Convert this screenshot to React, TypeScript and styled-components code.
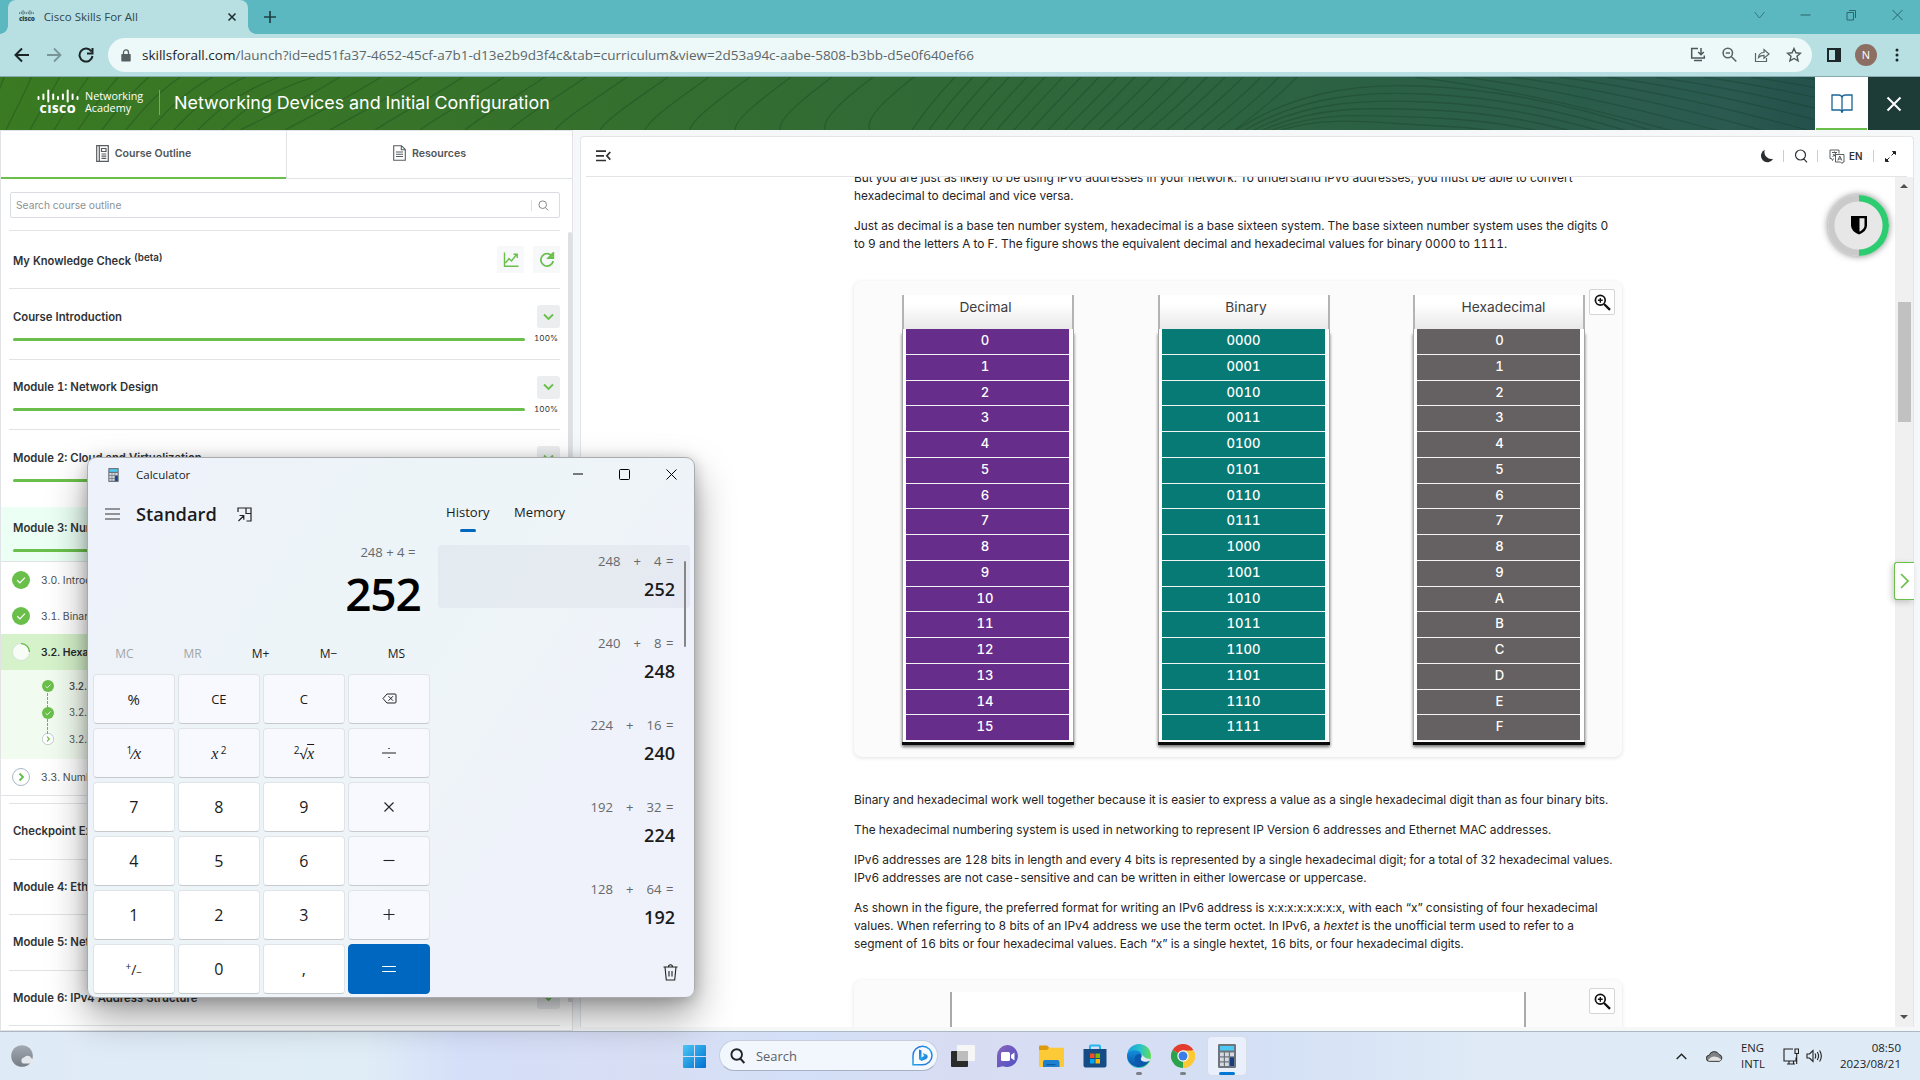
import React from "react";
import styled, { createGlobalStyle, css } from "styled-components";

const UI = `"Open Sans", "Noto Sans", sans-serif`;
const PAGE = `Inter, "Liberation Sans", sans-serif`;
const GREEN = "#6abf4b";

const Global = createGlobalStyle`
  * { box-sizing: border-box; }
  html, body { margin: 0; padding: 0; overflow: hidden; }
  svg { display: block; flex: none; }
`;

const Screen = styled.div`
  position: relative;
  width: 1920px;
  height: 1080px;
  display: flex;
  flex-direction: column;
  overflow: hidden;
  background: #f5f7f9;
  font-family: ${PAGE};
  font-variant-numeric: tabular-nums;
  white-space: nowrap;
`;

/* ---------- browser chrome ---------- */

const TabStrip = styled.div`
  height: 34px;
  flex: none;
  display: flex;
  align-items: stretch;
  background: #5bb8c1;
  padding-left: 8px;
  font-family: ${UI};
`;

const BrowserTab = styled.div`
  position: relative;
  width: 240px;
  display: flex;
  align-items: center;
  gap: 9px;
  padding: 0 10px 1px 11px;
  border-radius: 8px 8px 0 0;
  background: #b8e0e3;
  font-size: 11.5px;
  color: #30474a;
  &::before, &::after {
    content: "";
    position: absolute;
    bottom: 0;
    width: 8px;
    height: 8px;
  }
  &::before { left: -8px; background: radial-gradient(circle at 0 0, #5bb8c1 7.5px, #b8e0e3 8px); }
  &::after { right: -8px; background: radial-gradient(circle at 100% 0, #5bb8c1 7.5px, #b8e0e3 8px); }
`;

const TabTitle = styled.span`flex: 1;`;

const NewTab = styled.div`
  display: flex;
  align-items: center;
  padding-left: 16px;
`;

const WindowControls = styled.div`
  margin-left: auto;
  display: flex;
  align-items: center;
  gap: 35px;
  padding: 0 17px 5px 0;
`;

const Toolbar = styled.div`
  height: 43px;
  flex: none;
  display: flex;
  align-items: center;
  background: #b8e0e3;
  border-bottom: 1px solid #87abb0;
  padding: 0 0 0 14px;
  font-family: ${UI};
`;

const NavButtons = styled.div`
  display: flex;
  align-items: center;
  gap: 16px;
  width: 94px;
`;

const AddressBar = styled.div`
  width: 1704px;
  height: 34px;
  display: flex;
  align-items: center;
  padding: 0 10px 0 13px;
  border-radius: 17px;
  background: #edf8f8;
  font-size: 13.52px;
  color: #5d6668;
`;

const Url = styled.span`
  flex: 1;
  margin-left: 11px;
  b { font-weight: 400; color: #1c2526; }
`;

const AddressActions = styled.div`
  display: flex;
  gap: 16px;
  align-items: center;
`;

const BrowserActions = styled.div`
  display: flex;
  align-items: center;
  margin-left: 15px;
  gap: 14px;
`;

const Avatar = styled.div`
  width: 22px;
  height: 22px;
  border-radius: 50%;
  background: #8d6e63;
  color: #fff;
  font-size: 11px;
  line-height: 22px;
  text-align: center;
`;

/* ---------- course header ---------- */

const CourseHeader = styled.header`
  position: relative;
  height: 53px;
  flex: none;
  display: flex;
  align-items: center;
  padding-left: 37px;
  background: linear-gradient(90deg, #3a7a22 0, #377329 22%, #306838 52%, #2c6045 72%, #2a5a50 90%, #25524c 94%);
`;

const HeaderLines = styled.svg`
  position: absolute;
  inset: 0;
`;

const Brand = styled.div`
  position: relative;
  display: flex;
  align-items: center;
  margin-top: -2px;
  color: #fff;
`;

const BrandName = styled.div`
  width: 75px;
  margin-left: 6px;
  border-right: 1px solid #7ea56f;
  font-family: ${UI};
  font-size: 10.8px;
  line-height: 12.4px;
  height: 25px;
`;

const CourseTitle = styled.h1`
  position: relative;
  margin: -2px 0 0 14px;
  font-size: 17.92px;
  font-weight: 400;
  color: #fff;
`;

const HeaderButtons = styled.div`
  position: relative;
  margin-left: auto;
  height: 53px;
  display: flex;
`;

const HeaderButton = styled.div<{ $active?: boolean }>`
  width: ${(p) => (p.$active ? 53 : 52)}px;
  display: flex;
  align-items: center;
  justify-content: center;
  background: #1d3c38;
  ${(p) => p.$active && css`
    background: linear-gradient(${GREEN}, ${GREEN}) 50% 100% / 51px 2px no-repeat #fff;
  `}
`;

const Workspace = styled.div`
  height: 901px;
  flex: none;
  display: flex;
`;

/* ---------- outline sidebar ---------- */

const Sidebar = styled.aside`
  width: 573px;
  height: 901px;
  overflow: hidden;
  background: #fff;
  border: 1px solid #e2e3e6;
  color: #303336;
`;

const SideTabs = styled.div`
  display: flex;
  height: 48px;
`;

const SideTab = styled.div<{ $active?: boolean }>`
  flex: 1;
  display: flex;
  align-items: center;
  justify-content: center;
  gap: 6px;
  padding-bottom: ${(p) => (p.$active ? 2 : 3)}px;
  font-size: 10.6px;
  font-weight: 600;
  color: #525558;
  border-bottom: ${(p) => (p.$active ? `2px solid ${GREEN}` : "1px solid #e2e3e6")};
  border-left: ${(p) => (p.$active ? "none" : "1px solid #e2e3e6")};
`;

const SearchBox = styled.div`
  display: flex;
  align-items: center;
  height: 26px;
  margin: 13px 12px 12px 9px;
  padding: 0 10px 0 5px;
  border: 1px solid #d9dce1;
  border-radius: 2px;
  font-size: 10.26px;
  color: #8d9196;
`;

const SearchIcon = styled.span`
  margin-left: auto;
  padding-left: 6px;
  border-left: 1px solid #dcdfe2;
`;

const Outline = styled.div`
  display: flex;
  height: 820px;
`;

const OutlineList = styled.div`flex: 1;`;

const OutlineThumb = styled.div`
  width: 4px;
  height: 770px;
  margin: 2px 0 0 8px;
  border-radius: 4px 4px 0 0;
  background: #dcdfe4;
`;

const Section = styled.div<{ $h: number }>`
  height: ${(p) => p.$h}px;
  margin: 0 0 0 8px;
  padding-left: 4px;
  border-top: 1px solid #e2e3e5;
`;

const KnowledgeRow = styled.div`
  display: flex;
  align-items: center;
  height: 57px;
  gap: 9px;
`;

const KnowledgeTitle = styled.div`
  flex: 1;
  font-size: 11.15px;
  font-weight: 600;
  padding-top: 3px;
  sup { font-size: 9.8px; vertical-align: 4px; line-height: 0; }
`;

const SquareButton = styled.div`
  width: 27px;
  height: 27px;
  display: flex;
  align-items: center;
  justify-content: center;
  background: #f6f8fa;
`;

const SectionHead = styled.div<{ $top: number }>`
  display: flex;
  align-items: center;
  justify-content: space-between;
  height: 23px;
  margin-top: ${(p) => p.$top}px;
  font-size: 11.3px;
  font-weight: 600;
`;

const ChevronBox = styled.span`
  width: 23px;
  height: 23px;
  display: flex;
  align-items: center;
  justify-content: center;
  border-radius: 3px;
  background: #ebedef;
`;

const ProgressRow = styled.div`
  display: flex;
  align-items: center;
  justify-content: space-between;
  height: 12px;
  margin-top: 4px;
  padding-right: 2px;
  font-size: 8.2px;
`;

const Bar = styled.div`
  width: 512px;
  height: 3px;
  margin-top: 2px;
  border-radius: 2px;
  background: ${GREEN};
`;

const CurrentSection = styled.div`
  height: 55px;
  margin: 7px -10px 0 0;
  padding-left: 12px;
  border-bottom: 1px solid #e2e3e5;
  background: #ebfff4;
  overflow: hidden;
`;

const Topic = styled.div<{ $current?: boolean; $end?: boolean }>`
  display: flex;
  align-items: center;
  gap: 11px;
  height: ${(p) => (p.$end ? 37 : 36)}px;
  margin-right: -10px;
  padding-left: 11px;
  font-size: 10.4px;
  font-weight: ${(p) => (p.$current ? 600 : 400)};
  color: ${(p) => (p.$current ? "#26292b" : "#4c5053")};
  background: ${(p) => (p.$current ? "#d6f2cb" : "#fff")};
  border-bottom: ${(p) => (p.$end ? "1px solid #e2e3e5" : "none")};
`;

const SubTopics = styled.div`
  height: 89px;
  margin-right: -10px;
  padding: 3px 0 0 41px;
  background: #f2fbef;
`;

const SubTopic = styled.div<{ $bold?: boolean }>`
  position: relative;
  display: flex;
  align-items: center;
  gap: 15px;
  height: 26.5px;
  font-size: 9.7px;
  font-weight: ${(p) => (p.$bold ? 600 : 400)};
  color: #4c5053;
  &:not(:first-child)::before {
    content: "";
    position: absolute;
    left: 5px;
    top: -7px;
    height: 15px;
    border-left: 1px dashed #8f9a8f;
  }
`;

const Gap = styled.div`height: 7px;`;

/* ---------- reading panel ---------- */

const Reader = styled.main`
  width: 1334px;
  height: 891px;
  margin: 6px 0 0 7px;
  display: flex;
  flex-direction: column;
  background: #fff;
  border: 1px solid #e3e6e9;
  border-bottom: none;
  border-radius: 4px 4px 0 0;
`;

const ReaderBar = styled.div`
  height: 40px;
  flex: none;
  display: flex;
  align-items: center;
  justify-content: space-between;
  margin: 0 6px 0 5px;
  padding: 0 10px 1px 10px;
  border-bottom: 1px solid #e2e4e6;
`;

const ReaderTools = styled.div`
  display: flex;
  align-items: center;
`;

const Rule = styled.i<{ $l: number; $r: number }>`
  width: 1px;
  height: 12px;
  margin: 0 ${(p) => p.$r}px 0 ${(p) => p.$l}px;
  background: #c9ccd0;
`;

const Lang = styled.b`
  width: 15px;
  margin-left: 4px;
  font-size: 9.9px;
  font-weight: 600;
  color: #303336;
`;

const ReaderBody = styled.div`
  flex: 1;
  display: flex;
  overflow: hidden;
`;

const Article = styled.article`
  width: 768px;
  margin: -8px 273px 0 273px;
  font-size: 11.89px;
  line-height: 18px;
  color: #1f2326;
  p { margin: 0 0 12px; }
`;

const ScrollTrack = styled.div`
  flex: 1;
  display: flex;
  flex-direction: column;
  align-items: center;
  background: #f0f0f0;
`;

const Arrow = styled.i<{ $down?: boolean }>`
  margin-top: ${(p) => (p.$down ? "auto" : "7px")};
  margin-bottom: ${(p) => (p.$down ? "8px" : 0)};
  border: 4px solid transparent;
  ${(p) => (p.$down
    ? css`border-top-color: #505050; border-bottom-width: 0;`
    : css`border-bottom-color: #505050; border-top-width: 0;`)}
`;

const ScrollThumb = styled.div`
  width: 13px;
  height: 120px;
  margin-top: 114px;
  background: #c1c1c1;
`;

const Figure = styled.div<{ $h: number; $top: number }>`
  position: relative;
  display: flex;
  gap: 83.5px;
  height: ${(p) => p.$h}px;
  margin: ${(p) => p.$top}px 0 34px;
  padding: 14px 0 0 48px;
  border-radius: 8px;
  background: #fbfbfb;
  box-shadow: 0 1px 4px rgba(0, 0, 0, 0.12);
`;

const ZoomButton = styled.div`
  position: absolute;
  top: 8px;
  right: 7px;
  width: 26px;
  height: 26px;
  display: flex;
  align-items: center;
  justify-content: center;
  border: 1px solid #d5d5d5;
  border-radius: 2px;
  background: #fff;
`;

const Column = styled.div`
  width: 172px;
`;

const ColumnHead = styled.div<{ $shift: number }>`
  height: 34px;
  padding-top: 3px;
  text-align: center;
  text-indent: ${(p) => p.$shift * 2}px;
  font-size: 13.75px;
  color: #3d3d3d;
  background: linear-gradient(#fff 25%, #e9e9e9);
  border: solid #b4b4b4;
  border-width: 0 2px;
`;

const Cells = styled.div`
  padding: 0 4px 1px 3px;
  background: #fff;
  border: solid #a5a5a5;
  border-width: 0 1px;
  box-shadow: 0 3px 0 #0b0b0b, 0 5px 3px rgba(0, 0, 0, 0.55);
`;

const Cell = styled.div<{ $color: string; $shift: number }>`
  height: 25.75px;
  line-height: 22px;
  text-align: center;
  text-indent: ${(p) => p.$shift * 2}px;
  font-size: 13.1px;
  font-weight: 500;
  color: #fff;
  background: ${(p) => p.$color};
  border: solid #f4f4f4;
  border-width: 0 0 1.2px;
`;

const Sheet = styled.div`
  width: 576px;
  height: 60px;
  margin: -2px 0 0 48px;
  background: #fff;
  border: solid #aaa;
  border-width: 0 2px;
`;

/* ---------- overlays ---------- */

const ShieldBadge = styled.div`
  position: absolute;
  left: 1828px;
  top: 195px;
  width: 61px;
  height: 61px;
  border-radius: 50%;
  display: flex;
  align-items: center;
  justify-content: center;
  padding: 0 0 2px 0;
  background: radial-gradient(circle, #e7e7e7 23.5px, transparent 24.5px), linear-gradient(90deg, #cacaca 50%, #2ecc71 50%);
  box-shadow: 0 0 7px rgba(0, 0, 0, 0.5);
`;

const DrawerHandle = styled.div`
  position: absolute;
  left: 1894px;
  top: 562px;
  width: 20px;
  height: 38px;
  display: flex;
  align-items: center;
  justify-content: center;
  background: #fff;
  border: 1px solid ${GREEN};
  border-right: none;
  border-radius: 3px 0 0 3px;
  box-shadow: -2px 2px 6px rgba(0, 0, 0, 0.2);
`;

/* ---------- calculator ---------- */

const CalcWindow = styled.section`
  position: absolute;
  left: 87px;
  top: 457px;
  width: 608px;
  height: 541px;
  display: flex;
  flex-direction: column;
  border: 1px solid #a9abae;
  border-radius: 9px;
  background: linear-gradient(125deg, #eef2fa 12%, #edf4f8 32%, #eef4f8 58%, #eff2fb 72%);
  box-shadow: 0 18px 38px rgba(0, 0, 0, 0.38), 0 2px 14px rgba(0, 0, 0, 0.2);
  font-family: ${UI};
  color: #1b1b1b;
`;

const CalcTitleBar = styled.div`
  height: 32px;
  flex: none;
  display: flex;
  align-items: center;
  gap: 17px;
  padding: 1px 17px 0 20px;
  font-size: 11.55px;
`;

const CalcControls = styled.div`
  margin: -1px 0 0 auto;
  display: flex;
  align-items: center;
  gap: 36px;
`;

const CalcBody = styled.div`
  flex: 1;
  display: flex;
`;

const Keypad = styled.div`
  width: 350px;
  padding-left: 5px;
`;

const ModeRow = styled.div`
  height: 56px;
  display: flex;
  align-items: center;
  padding-left: 12px;
  margin-top: -4px;
`;

const Mode = styled.div`
  margin: 0 20px 0 16px;
  font-size: 18.3px;
  font-weight: 600;
  line-height: 24px;
`;

const Expression = styled.div`
  margin: 1px 22.5px 0 0;
  text-align: right;
  font-size: 13.1px;
  line-height: 18px;
  color: #666a6d;
`;

const Display = styled.div`
  margin: 4px 17.5px 0 0;
  height: 54px;
  text-align: right;
  font-size: 46px;
  line-height: 56px;
  font-weight: 600;
  letter-spacing: -1.2px;
  color: #000;
`;

const MemoryRow = styled.div`
  display: grid;
  grid-template-columns: repeat(5, 68px);
  height: 41px;
  margin: 14px 0 0 -2.5px;
  align-items: center;
  justify-items: center;
  font-size: 12px;
`;

const MemoryKey = styled.span<{ $off?: boolean }>`
  color: ${(p) => (p.$off ? "#a2a5a8" : "#1b1b1b")};
`;

const Keys = styled.div`
  display: grid;
  grid-template-columns: repeat(4, 81.5px);
  grid-auto-rows: 50.4px;
  gap: 3.6px;
`;

const Key = styled.div<{ $kind: "op" | "num" | "eq" }>`
  display: flex;
  align-items: center;
  justify-content: center;
  border: 1px solid ${(p) => (p.$kind === "eq" ? "#0067c0" : "#dfe4e8")};
  border-bottom-color: ${(p) => (p.$kind === "eq" ? "#0067c0" : "#c6cacd")};
  border-radius: 4px;
  background: ${(p) => ({ op: "#f8f9fe", num: "#fff", eq: "#0067c0" }[p.$kind])};
  font-size: ${(p) => (p.$kind === "num" ? 16 : 13)}px;
`;

const Formula = styled.span`
  font-size: 14px;
  i { font-family: "Liberation Serif", serif; font-size: 16px; }
  sup { font-size: 10px; line-height: 0; vertical-align: 5px; }
  sub { font-size: 10px; line-height: 0; vertical-align: -1px; }
  u { text-decoration: overline; }
`;

const Percent = styled.span`font-size: 15px;`;

const HistoryPane = styled.div`
  flex: 1;
  display: flex;
  flex-direction: column;
`;

const PaneTabs = styled.div`
  display: flex;
  gap: 24.5px;
  height: 54.5px;
  padding: 13px 0 0 8px;
  font-size: 13.08px;
  line-height: 18px;
`;

const PaneTab = styled.div<{ $on?: boolean }>`
  display: flex;
  flex-direction: column;
  align-items: center;
  &::after {
    content: "";
    width: 16px;
    height: 3px;
    margin-top: 8px;
    border-radius: 2px;
    background: ${(p) => (p.$on ? "#0067c0" : "transparent")};
  }
`;

const HistoryList = styled.div`
  position: relative;
  display: flex;
  flex-direction: column;
  gap: 19px;
  width: 252px;
`;

const HistoryThumb = styled.i`
  position: absolute;
  right: 4px;
  top: 16px;
  width: 2px;
  height: 86px;
  border-radius: 1px;
  background: #868686;
`;

const HistoryItem = styled.div<{ $hover?: boolean }>`
  height: 63px;
  padding: 7px 15px 0 0;
  border-radius: 4px;
  background: ${(p) => (p.$hover ? "rgba(30, 20, 40, 0.04)" : "transparent")};
  text-align: right;
`;

const Operation = styled.div`
  display: flex;
  justify-content: flex-end;
  padding-right: 1.5px;
  font-size: 13.1px;
  line-height: 19px;
  color: #66696c;
  span { margin-right: 13px; }
  b { margin-left: 4.5px; font-weight: 400; }
`;

const Result = styled.div`
  margin-top: 6px;
  font-size: 18px;
  font-weight: 600;
  line-height: 24px;
`;

const Trash = styled.div`
  margin: auto 16px 16px auto;
`;

/* ---------- taskbar ---------- */

const Taskbar = styled.footer`
  height: 49px;
  flex: none;
  display: grid;
  grid-template-columns: 683px 1fr auto;
  align-items: center;
  border-top: 1px solid #adb8c4;
  background: linear-gradient(90deg, #dfeaf7 0, #dfedf6 16%, #e0edf7 19%, #d5dff9 24%, #d8def4 33%, #d3e0f7 42%, #d8dcf2 50%, #d4e0f5 66%, #dfeaf6 77%, #deebf6 100%);
  font-family: ${UI};
`;

const Weather = styled.div`padding-left: 11px;`;

const TaskIcons = styled.div`
  display: flex;
  align-items: center;
  height: 48px;
`;

const TaskSearch = styled.div`
  display: flex;
  align-items: center;
  width: 219px;
  height: 31px;
  margin: 0 6px 1px 13px;
  padding: 0 4px 0 10px;
  border: 1px solid #c6cede;
  border-bottom-color: #a9b2c4;
  border-radius: 16px;
  background: #f2f6fd;
  font-size: 12.9px;
  color: #5c6066;
  span { flex: 1; margin-left: 11px; }
`;

const Task = styled.div<{ $state?: "open" | "active" }>`
  width: 38px;
  height: 38px;
  margin-right: 6px;
  display: flex;
  flex-direction: column;
  align-items: center;
  justify-content: center;
  position: relative;
  border-radius: 4px;
  background: ${(p) => (p.$state === "active" ? "#e9f0fb" : "transparent")};
  box-shadow: ${(p) => (p.$state === "active" ? "0 0 0 1px #d5dcea" : "none")};
  &::after {
    content: "";
    position: absolute;
    bottom: 0;
    width: ${(p) => (p.$state === "active" ? 16 : 6)}px;
    height: 3px;
    border-radius: 2px;
    background: ${(p) => (p.$state === "active" ? "#0078d4" : p.$state ? "#7c8087" : "transparent")};
  }
`;

const Tray = styled.div`
  display: flex;
  align-items: center;
  padding-right: 19px;
  line-height: 16px;
  color: #1a1c1f;
`;

const TrayCloud = styled.svg`margin: 0 18px 0 19px;`;

const TrayText = styled.div<{ $w: number; $align: string; $size: number }>`
  width: ${(p) => p.$w}px;
  text-align: ${(p) => p.$align};
  font-size: ${(p) => p.$size}px;
`;

const TrayPair = styled.div`
  display: flex;
  align-items: center;
  gap: 7px;
`;

/* ---------- icons ---------- */

type LineProps = { w: number; h?: number; d: string; color?: string; sw?: number; fill?: string };
const Line = ({ w, h = w, d, color = "#222", sw = 1, fill = "none" }: LineProps) => (
  <svg width={w} height={h} viewBox={`0 0 ${w} ${h}`} fill={fill} stroke={color} strokeWidth={sw}>
    <path d={d} />
  </svg>
);

const CiscoBars = ({ w, color }: { w: number; color: string }) => (
  <svg width={w} height={w / 3} viewBox="0 0 42 14" stroke={color} strokeWidth="2" strokeLinecap="round">
    <path d="M1.500 8v2M6.400 5.500v4.500M11.300 1.500v11M16.200 5.500v4.500M21 8v2M25.900 5.500v4.500M30.700 1.500v11M35.600 5.500v4.500M40.500 8v2" />
  </svg>
);

const LogoMark = styled.div<{ $size: number; $color: string }>`
  display: flex;
  flex-direction: column;
  align-items: center;
  color: ${(p) => p.$color};
  font-family: ${UI};
  font-size: ${(p) => p.$size}px;
  line-height: ${(p) => p.$size * 1.08}px;
  font-weight: 800;
  letter-spacing: ${(p) => (p.$size > 8 ? 0.6 : -0.2)}px;
`;

const CheckDot = ({ r }: { r: number }) => (
  <svg width={r * 2} height={r * 2} viewBox="0 0 18 18">
    <circle cx="9" cy="9" r="9" fill={GREEN} />
    <path d="M5.200 9.200l2.700 2.600 5-5.200" fill="none" stroke="#fff" strokeWidth="1.200" />
  </svg>
);

const NextDot = ({ r }: { r: number }) => (
  <svg width={r * 2} height={r * 2} viewBox="0 0 18 18">
    <circle cx="9" cy="9" r="8.500" fill="#fff" stroke="#a9b8c4" />
    <path d="M7.500 5.500L11 9l-3.500 3.500" fill="none" stroke={GREEN} strokeWidth="1.900" />
  </svg>
);

const PartialDot = () => (
  <svg width="18" height="18" viewBox="0 0 18 18">
    <circle cx="9" cy="9" r="8.500" fill="#f7fdf6" stroke="#d3dfd2" strokeWidth=".8" />
    <path d="M9 .6A8.400 8.400 0 0 1 17.400 9" fill="none" stroke={GREEN} strokeWidth="1.300" />
  </svg>
);

const Chevron = () => (
  <ChevronBox><Line w={11} h={8} d="M1 1.500l4.500 4.500L10 1.500" color={GREEN} sw={1.9} /></ChevronBox>
);

const Magnify = () => (
  <ZoomButton>
    <svg width="17" height="17" viewBox="0 0 17 17" fill="none" stroke="#111">
      <circle cx="6.300" cy="6.300" r="4.900" strokeWidth="1.700" />
      <path d="M3.900 6.300h4.800M6.300 3.900v4.800" strokeWidth="1.400" />
      <path d="M10 10l6 5.800" strokeWidth="2.300" />
    </svg>
  </ZoomButton>
);

const CalcGlyph = ({ w, h }: { w: number; h: number }) => (
  <svg width={w} height={h} viewBox="0 0 18 24">
    <rect width="18" height="24" rx="1.200" fill="#6d747c" />
    <rect x="2" y="2" width="14" height="4.500" fill="#4cc8f4" />
    <g fill="#d5dae0">
      <path d="M2 8.500h3.800v3.800H2zM7 8.500h3.800v3.800H7zM12 8.500h4v3.800h-4zM2 13.500h3.800v3.800H2zM7 13.500h3.800v3.800H7zM2 18.500h3.800v3.500H2zM7 18.500h3.800v3.500H7z" />
    </g>
    <path d="M12 13.500h4V22h-4z" fill="#173d80" />
  </svg>
);

const contour = () => {
  const out: string[] = [];
  for (let i = 0; i < 11; i++) out.push(`M${4 + i * 27 + i * i * 0.4} 0C${-2 + i * 26} 18 ${-12 + i * 25} 38 ${-18 + i * 24} 53`);
  for (let i = 0; i < 15; i++) out.push(`M${340 + i * 41} 0C${305 + i * 41.5} 22 ${262 + i * 43} 42 ${240 + i * 45} 53`);
  for (let i = 0; i < 20; i++) out.push(`M${955 + i * 18} 0C${938 + i * 18} 18 ${922 + i * 17.5} 38 ${912 + i * 17} 53`);
  for (let i = 0; i < 6; i++) out.push(`M${1236 + i * 9} 53C${1290 + i * 8} ${18 + i * 4} ${1350 + i * 4} ${6 + i * 8} ${1420 + i * 4} ${9 + i * 8}S${1560} ${24 + i * 8} ${1650} ${53 + i * 8}`);
  for (let i = 0; i < 11; i++) out.push(`M${1415 + i * 48} 0Q${1530 + i * 46} 14 ${1680 + i * 46} 56`);
  return out.join("");
};

const WinLogo = () => (
  <svg width="23" height="23" viewBox="0 0 23 23">
    <defs><linearGradient id="win" x1="0" y1="0" x2="1" y2="1"><stop stopColor="#4cc9f6" /><stop offset="1" stopColor="#006fd0" /></linearGradient></defs>
    <path d="M0 1q0-1 1-1h10v11H0zM12 0h10q1 0 1 1v10H12zM0 12h11v11H1q-1 0-1-1zM12 12h11v10q0 1-1 1H12z" fill="url(#win)" />
  </svg>
);

const Bing = () => (
  <svg width="21" height="21" viewBox="0 0 21 21">
    <defs><linearGradient id="bing" x1="0" y1="0" x2="1" y2="1"><stop stopColor="#2b66d8" /><stop offset=".5" stopColor="#1fa5e8" /><stop offset="1" stopColor="#2b5fd0" /></linearGradient></defs>
    <path d="M1 19.800V10.500a9.500 9.300 0 1 1 9.500 9.300z" fill="#f7fbff" stroke="url(#bing)" strokeWidth="1.500" />
    <path d="M7 4.500l2.500 1v7l2.500-1.500-1.200-3 4 1.700c1.500 1.200 1 3.400-.5 4.200L9.500 16 7 14.300z" fill="url(#bing)" />
  </svg>
);

const TaskView = () => (
  <svg width="24" height="22" viewBox="0 0 24 22">
    <rect x="0" y="6" width="17" height="16" rx="1" fill="#2b2b2b" />
    <rect x="6" y="0" width="18" height="16" rx="1" fill="#f6f6f6" />
    <rect x="6" y="6" width="11" height="10" fill="#bdbdbd" />
  </svg>
);

const Chat = () => (
  <svg width="24" height="24" viewBox="0 0 24 24">
    <defs><linearGradient id="chat" x1="0" y1="0" x2="1" y2="1"><stop stopColor="#8a62b8" /><stop offset="1" stopColor="#4b52c9" /></linearGradient></defs>
    <path d="M12 1a11 11 0 1 1-4 21.300L2 23.500V12A11 11 0 0 1 12 1z" fill="url(#chat)" />
    <rect x="6" y="8" width="9" height="9" rx="1.500" fill="#fff" />
    <path d="M16 11l3.500-2.500v8L16 14z" fill="#fff" />
  </svg>
);

const Folder = () => (
  <svg width="25" height="22" viewBox="0 0 25 22">
    <path d="M0 1.500Q0 .5 1 .5h7l2.500 2.500L8 5.500H0z" fill="#dd9a0c" />
    <path d="M0 5h8l2.500-2.200H24q1 0 1 1V21q0 1-1 1H1q-1 0-1-1z" fill="#fcc937" />
    <path d="M4 22v-5q0-2 2-2h12.500q2 0 2 2v5z" fill="#1e7fd0" />
    <path d="M7.500 19h9v1.200h-9z" fill="#0c5aa0" />
  </svg>
);

const Store = () => (
  <svg width="24" height="24" viewBox="0 0 24 24">
    <path d="M7 6V2.500q0-1 1-1h8q1 0 1 1V6" fill="none" stroke="#23b7ef" strokeWidth="2" />
    <path d="M.5 5h23v16.500q0 2-2 2h-19q-2 0-2-2z" fill="#164c86" />
    <path d="M7 9.500h4.500V14H7z" fill="#f25022" /><path d="M12.500 9.500H17V14h-4.500z" fill="#7fba00" />
    <path d="M7 15h4.500v4.500H7z" fill="#00a4ef" /><path d="M12.500 15H17v4.500h-4.500z" fill="#ffb900" />
  </svg>
);

const Edge = () => (
  <svg width="24" height="24" viewBox="0 0 24 24">
    <defs>
      <linearGradient id="eg" x1="0" y1=".3" x2="1" y2=".4"><stop stopColor="#1b9de2" /><stop offset=".55" stopColor="#2bc4c6" /><stop offset="1" stopColor="#62dc58" /></linearGradient>
      <linearGradient id="eb" x1="0" y1="0" x2="0" y2="1"><stop stopColor="#1290dc" /><stop offset="1" stopColor="#0c4fa2" /></linearGradient>
    </defs>
    <circle cx="12" cy="12" r="12" fill="url(#eg)" />
    <path d="M0 12C.5 7.500 4.500 6.200 7.500 6.200c5 0 7.300 3 7.300 5.800 0 1.300-1 2-1 3 0 1.700 2 2.800 4.700 2.800 1.600 0 3-.4 4-1A12 12 0 0 1 0 12z" fill="url(#eb)" />
    <path d="M9.500 11c-1.300 1-2 2.600-1.800 4.600.4 3.800 4 6.600 8 6 2.800-.6 5-2.300 6.800-4.800-3 1.600-8.700 1.200-8.700-1.800 0-1 1-1.700 1-3 0-2.500-3.500-2.700-5.300-1z" fill="#0b59ae" />
    <path d="M13.800 15c0-1 1-1.700 1-3 0-.8-.3-1.700-.8-2.500 0 0 3 5.500 9.500 5.500-.3.800-.6 1.300-1 1.800-3 1.600-8.700 1.200-8.700-1.800z" fill="#dfe8f7" />
  </svg>
);

const Chrome = () => (
  <svg width="24" height="24" viewBox="0 0 24 24">
    <path d="M12 12L1.600 6A12 12 0 0 1 22.400 6z" fill="#e33b2e" />
    <path d="M12 12l10.400-6A12 12 0 0 1 12 24z" fill="#fcc934" />
    <path d="M12 12v12A12 12 0 0 1 1.600 6z" fill="#2ba24c" />
    <path d="M12 6.500h10.600A12 12 0 0 1 12 24l4.800-9.200z" fill="#fcc934" />
    <circle cx="12" cy="12" r="5.700" fill="#fff" />
    <circle cx="12" cy="12" r="4.500" fill="#3b7de9" />
  </svg>
);

/* ---------- data ---------- */

const columns = [
  { title: "Decimal", color: "#662d8a", head: -2.5, cell: -2.5, values: Array.from({ length: 16 }, (_, i) => String(i)) },
  { title: "Binary", color: "#077a75", head: 2.5, cell: 0.5, values: Array.from({ length: 16 }, (_, i) => i.toString(2).padStart(4, "0")) },
  { title: "Hexadecimal", color: "#656162", head: 4.5, cell: 1, values: Array.from({ length: 16 }, (_, i) => i.toString(16).toUpperCase()) },
];

const history = [["248", "4", "252"], ["240", "8", "248"], ["224", "16", "240"], ["192", "32", "224"], ["128", "64", "192"]];

const opPath: Record<string, string> = {
  "÷": "M1 8h14M7.300 3.500h1.400M7.300 12.500h1.400",
  "×": "M3.500 3.500l9 9M12.500 3.500l-9 9",
  "−": "M2.500 7.500h11",
  "+": "M2.500 7.500h11M8 2v11",
  "=": "M1 5.500h14M1 10.500h14",
};
const op = (k: string) => <Line w={16} d={opPath[k]} color={k === "=" ? "#fff" : "#222"} sw={1.1} />;

const keys: ["op" | "num" | "eq", React.ReactNode][] = [
  ["op", <Percent>%</Percent>], ["op", "CE"], ["op", "C"],
  ["op", <Line w={15} h={12} d="M5 1h8q1 0 1 1v7q0 1-1 1H5L1 5.500zM6.500 3.200l4.500 4.500M11 3.200L6.500 7.700" />],
  ["op", <Formula><sup>1</sup>⁄<i>x</i></Formula>], ["op", <Formula><i>x</i><sup> 2</sup></Formula>],
  ["op", <Formula><sup>2</sup>√<u><i>x</i></u></Formula>], ["op", op("÷")],
  ["num", "7"], ["num", "8"], ["num", "9"], ["op", op("×")],
  ["num", "4"], ["num", "5"], ["num", "6"], ["op", op("−")],
  ["num", "1"], ["num", "2"], ["num", "3"], ["op", op("+")],
  ["num", <Formula><sup>+</sup>/<sub>−</sub></Formula>], ["num", "0"], ["num", ","], ["eq", op("=")],
];

const Module = ({ title, h, top, bar }: { title: string; h: number; top: number; bar?: boolean }) => (
  <Section $h={h}>
    <SectionHead $top={top}>{title}<Chevron /></SectionHead>
    {bar && <ProgressRow><Bar />100%</ProgressRow>}
  </Section>
);

export default function App() {
  return (
    <Screen>
      <Global />
      <TabStrip>
        <BrowserTab>
          <LogoMark $size={6.5} $color="#30474a"><CiscoBars w={15} color="#30474a" />cisco</LogoMark>
          <TabTitle>Cisco Skills For All</TabTitle>
          <Line w={12} d="M2.500 2.500l7 7M9.500 2.500l-7 7" sw={1.5} color="#1c2b2d" />
        </BrowserTab>
        <NewTab><Line w={12} d="M6 0v12M0 6h12" sw={1.7} color="#1f4145" /></NewTab>
        <WindowControls>
          <Line w={11} h={8} d="M.5 1l5 6 5-6" color="#37777e" />
          <Line w={11} h={2} d="M.5 1h10" color="#2c666d" />
          <Line w={11} h={12} d="M1 3.500h6.500v7.500H1zM3 1.500h6.500v7.500" color="#2c666d" />
          <Line w={11} h={12} d="M.5 1l10 10M10.500 1l-10 10" color="#2c666d" />
        </WindowControls>
      </TabStrip>

      <Toolbar>
        <NavButtons>
          <Line w={16} d="M15 8H2M8 1.500L1.500 8 8 14.500" sw={2} color="#1c2526" />
          <Line w={16} d="M1 8h13M8 1.500L14.500 8 8 14.500" sw={1.8} color="#7a9598" />
          <Line w={16} d="M13.500 4.500A6.500 6.500 0 1 0 14.500 9M14.500 1v5.500H9" sw={2} color="#1c2526" />
        </NavButtons>
        <AddressBar>
          <svg width="10" height="13" viewBox="0 0 10 13"><path d="M1 5h8q.7 0 .7.7v6q0 .8-.7.8H1q-.7 0-.7-.8v-6Q.3 5 1 5z" fill="#555e60" /><path d="M2.500 5.500V3.400a2.500 2.500 0 0 1 5 0v2.100" fill="none" stroke="#555e60" strokeWidth="1.300" /></svg>
          <Url><b>skillsforall.com</b>/launch?id=ed51fa37-4652-45cf-a7b1-d13e2b9d3f4c&tab=curriculum&view=2d53a94c-aabe-5808-b3bb-d5e0f640ef66</Url>
          <AddressActions>
            <Line w={16} d="M8 1.500H1.700V11h12.600V8.500M11 1v6.500M8.200 5L11 7.800 13.800 5M4 13.500h8" sw={1.5} color="#4e5759" />
            <Line w={16} d="M10.500 6A4.700 4.700 0 1 1 1.100 6a4.700 4.700 0 0 1 9.400 0zM9.300 9.500l5 5M3.700 6h4.300" sw={1.6} color="#5b6466" />
            <Line w={16} d="M1.500 6v8.500h11V11M4.500 10.500C5 6.500 7.500 5.500 10 5.500V2.500L15 7l-5 4.200V8.400C8 8.400 6 8.800 4.500 10.500z" sw={1.2} color="#5b6466" />
            <Line w={16} d="M8 1.500l1.900 4.300 4.600.4-3.500 3.100 1.100 4.600L8 11.500l-4.100 2.400L5 9.300 1.500 6.200l4.600-.4z" sw={1.4} color="#4e5759" />
          </AddressActions>
        </AddressBar>
        <BrowserActions>
          <svg width="14" height="14" viewBox="0 0 14 14"><path d="M1 1h12v12H1z" fill="none" stroke="#1d2628" strokeWidth="2" /><path d="M8 1h5v12H8z" fill="#1d2628" /></svg>
          <Avatar>N</Avatar>
          <svg width="8" height="14" viewBox="0 0 8 14" fill="#1d2628"><circle cx="6" cy="2" r="1.500" /><circle cx="6" cy="7" r="1.500" /><circle cx="6" cy="12" r="1.500" /></svg>
        </BrowserActions>
      </Toolbar>

      <CourseHeader>
        <HeaderLines width="1920" height="53" fill="none" stroke="#12351c" strokeOpacity=".28" strokeWidth="1.300"><path d={contour()} /></HeaderLines>
        <Brand>
          <LogoMark $size={11.2} $color="#fff"><CiscoBars w={42} color="#fff" />CISCO</LogoMark>
          <BrandName>Networking<br />Academy</BrandName>
        </Brand>
        <CourseTitle>Networking Devices and Initial Configuration</CourseTitle>
        <HeaderButtons>
          <HeaderButton $active><Line w={22} h={20} d="M11 3.500Q10.500 1.200 8 1H1v15h8q1.500 0 2 2.500.5-2.500 2-2.500h8V1h-7q-2.500.2-3 2.500zM11 3.500V19" color="#1a6496" sw={1.3} /></HeaderButton>
          <HeaderButton><Line w={16} d="M1.500 1.500l13 13M14.500 1.500l-13 13" color="#fff" sw={2} /></HeaderButton>
        </HeaderButtons>
      </CourseHeader>

      <Workspace>
        <Sidebar>
          <SideTabs>
            <SideTab $active><Line w={13} h={17} d="M.7.7h11.600v15.600H.7zM3.300.7v15.600M5.500 3.500h4.500v3H5.500zM5.500 9h4.800M5.500 11.200h4.800M5.500 13.300h4.800" color="#5a5d60" sw={1.2} />Course Outline</SideTab>
            <SideTab><Line w={13} h={16} d="M.7.7H8.500l3.800 3.800v10.800H.7zM8.300.7v4h4M3 7h7M3 9.300h7M3 11.500h7" color="#5a5d60" sw={1.1} />Resources</SideTab>
          </SideTabs>
          <SearchBox>Search course outline<SearchIcon><Line w={11} d="M8.500 4.700a3.800 3.800 0 1 1-7.600 0 3.800 3.800 0 0 1 7.600 0zM7.300 7.500l2.900 2.900" color="#85898d" /></SearchIcon></SearchBox>
          <Outline>
            <OutlineList>
              <Section $h={58}>
                <KnowledgeRow>
                  <KnowledgeTitle>My Knowledge Check <sup>(beta)</sup></KnowledgeTitle>
                  <SquareButton><Line w={16} d="M1.500.5v13.700h14M2.500 11l3.500-4.500 2.500 2.500 5-6.500M10.500 2.300h3.700V6" color={GREEN} sw={1.4} /></SquareButton>
                  <SquareButton><Line w={16} d="M13.300 4.500A6.200 6.200 0 1 0 14.200 9M14.300 1v5H9.300z" color={GREEN} sw={1.8} /></SquareButton>
                </KnowledgeRow>
              </Section>
              <Module title="Course Introduction" h={71} top={16} bar />
              <Module title="Module 1: Network Design" h={70} top={15.5} bar />
              <Module title="Module 2: Cloud and Virtualization" h={71} top={16} bar />
              <CurrentSection>
                <SectionHead $top={9}>Module 3: Numbering Systems<i /></SectionHead>
                <ProgressRow><Bar /></ProgressRow>
              </CurrentSection>
              <Topic><CheckDot r={9} />3.0. Introduction</Topic>
              <Topic><CheckDot r={9} />3.1. Binary Number System</Topic>
              <Topic $current><PartialDot />3.2. Hexadecimal Number System</Topic>
              <SubTopics>
                <SubTopic $bold><CheckDot r={6} />3.2.1</SubTopic>
                <SubTopic><CheckDot r={6} />3.2.2</SubTopic>
                <SubTopic><NextDot r={6} />3.2.3</SubTopic>
              </SubTopics>
              <Topic $end><NextDot r={9} />3.3. Numbering Systems Summary</Topic>
              <Gap />
              <Module title="Checkpoint Exam" h={56} top={15} />
              <Module title="Module 4: Ethernet" h={55} top={15} />
              <Module title="Module 5: Network Layer" h={56} top={15} />
              <Module title="Module 6: IPv4 Address Structure" h={55} top={15} />
              <Section $h={20} />
            </OutlineList>
            <OutlineThumb />
          </Outline>
        </Sidebar>

        <Reader>
          <ReaderBar>
            <Line w={15} h={12} d="M0 1.200h10M0 5.800h8M0 10.500h10M14.300 2l-3.500 3.800 3.500 3.800" color="#303336" sw={1.7} />
            <ReaderTools>
              <svg width="14" height="14" viewBox="0 0 14 14"><path d="M4.800.8A7 7 0 0 0 13.200 9.800 6.500 6.500 0 1 1 4.800.8z" fill="#2a2d30" /></svg>
              <Rule $l={9} $r={10} />
              <Line w={14} d="M11.500 6A5 5 0 1 1 1.500 6a5 5 0 0 1 10 0zM9.800 9.800l3.200 3.500" color="#303336" sw={1.2} />
              <Rule $l={9} $r={11} />
              <Line w={16} h={15} d="M10 4.500V1H1v8.500h1.500l1 2 1-2M3 3.500h5M5.500 2.500v1M3.500 7.500q3-1 3.500-4M4 5q1 2 3 2.500M6.500 5.500H15V13h-1l-1 1.500-1.500-1.500h-5zM8.800 11.500l2-4.500 2 4.500M9.500 10h2.600" color="#4a4d50" sw={0.9} />
              <Lang>EN</Lang>
              <Rule $l={9} $r={10} />
              <Line w={13} h={13} d="M2.500 10.500L5.500 7.500M7.500 5.500l3-3M8.500 1.500h3v3zM1.500 8.500v3h3z" color="#222" fill="#222" sw={1} />
            </ReaderTools>
          </ReaderBar>
          <ReaderBody>
            <Article>
              <p>But you are just as likely to be using IPv6 addresses in your network. To understand IPv6 addresses, you must be able to convert<br />hexadecimal to decimal and vice versa.</p>
              <p>Just as decimal is a base ten number system, hexadecimal is a base sixteen system. The base sixteen number system uses the digits 0<br />to 9 and the letters A to F. The figure shows the equivalent decimal and hexadecimal values for binary 0000 to 1111.</p>
              <Figure $h={476} $top={28}>
                {columns.map((c) => (
                  <Column key={c.title}>
                    <ColumnHead $shift={c.head}>{c.title}</ColumnHead>
                    <Cells>{c.values.map((v) => <Cell key={v} $color={c.color} $shift={c.cell}>{v}</Cell>)}</Cells>
                  </Column>
                ))}
                <Magnify />
              </Figure>
              <p>Binary and hexadecimal work well together because it is easier to express a value as a single hexadecimal digit than as four binary bits.</p>
              <p>The hexadecimal numbering system is used in networking to represent IP Version 6 addresses and Ethernet MAC addresses.</p>
              <p>IPv6 addresses are 128 bits in length and every 4 bits is represented by a single hexadecimal digit; for a total of 32 hexadecimal values.<br />IPv6 addresses are not case-sensitive and can be written in either lowercase or uppercase.</p>
              <p>As shown in the figure, the preferred format for writing an IPv6 address is x:x:x:x:x:x:x:x, with each “x” consisting of four hexadecimal<br />values. When referring to 8 bits of an IPv4 address we use the term octet. In IPv6, a <em>hextet</em> is the unofficial term used to refer to a<br />segment of 16 bits or four hexadecimal values. Each “x” is a single hextet, 16 bits, or four hexadecimal digits.</p>
              <Figure $h={120} $top={27}><Sheet /><Magnify /></Figure>
            </Article>
            <ScrollTrack><Arrow /><ScrollThumb /><Arrow $down /></ScrollTrack>
          </ReaderBody>
        </Reader>
      </Workspace>

      <Taskbar>
        <Weather>
          <svg width="24" height="23" viewBox="0 0 24 23"><defs><linearGradient id="moon" x1="0" y1="0" x2="0" y2="1"><stop stopColor="#a3a9b1" /><stop offset="1" stopColor="#767d86" /></linearGradient></defs><circle cx="11" cy="11" r="10.800" fill="url(#moon)" /><path d="M12 18.500a3.200 3.200 0 0 1 1-6 4.300 4.300 0 0 1 7.500.8 2.700 2.700 0 0 1 0 5.200z" fill="#e4e8ed" /></svg>
        </Weather>
        <TaskIcons>
          <WinLogo />
          <TaskSearch>
            <Line w={15} h={16} d="M12 6.500A5.300 5.300 0 1 1 1.400 6.500a5.300 5.300 0 0 1 10.600 0zM10.300 10.500l4 4.500" color="#22262b" sw={1.9} />
            <span>Search</span>
            <Bing />
          </TaskSearch>
          <Task><TaskView /></Task>
          <Task><Chat /></Task>
          <Task><Folder /></Task>
          <Task><Store /></Task>
          <Task $state="open"><Edge /></Task>
          <Task $state="open"><Chrome /></Task>
          <Task $state="active"><CalcGlyph w={18} h={24} /></Task>
        </TaskIcons>
        <Tray>
          <Line w={11} h={7} d="M.7 6l4.800-4.800L10.300 6" sw={1.4} />
          <TrayCloud width="17" height="12" viewBox="0 0 17 12"><path d="M3.500 11.300a3 3 0 0 1-.3-6A5.300 5.300 0 0 1 13 4.500a3.500 3.500 0 0 1 .3 6.800z" fill="#808285" stroke="#222" strokeWidth=".9" /><path d="M2 10.500Q7 3 15.500 9.500l-1.500 1.300H3z" fill="#e2e2e2" /></TrayCloud>
          <TrayText $w={42} $align="left" $size={11.3}>ENG<br />INTL</TrayText>
          <TrayPair>
            <Line w={16} h={17} d="M10 1H1v12h12V9.500M4 16h8M6 13v3M10.500 13v3M12 1h3.500v4.500H12zM13.700 5.500V16" sw={1.1} />
            <Line w={17} h={14} d="M1 5h2.500L7 1.500v11L3.500 9H1zM9 4.500q1.500 2.500 0 5M11.300 3q2.500 4 0 8M13.600 1.500q3.500 5.500 0 11" sw={1.1} />
          </TrayPair>
          <TrayText $w={78} $align="right" $size={11.5}>08:50<br />2023/08/21</TrayText>
        </Tray>
      </Taskbar>

      <ShieldBadge>
        <svg width="16" height="20" viewBox="0 0 16 20"><path d="M0 1h16v9.500q0 5.500-8 9-8-3.500-8-9z" fill="#000" /><path d="M8.500 3.300h5v7.200q0 3.500-5 6.200z" fill="#e7e7e7" /></svg>
      </ShieldBadge>
      <DrawerHandle><Line w={9} h={16} d="M1 1l7 7-7 7" color={GREEN} sw={1.7} /></DrawerHandle>

      <CalcWindow>
        <CalcTitleBar>
          <CalcGlyph w={11} h={14} />
          <span>Calculator</span>
          <CalcControls>
            <Line w={10} h={2} d="M0 1h10" color="#000" />
            <Line w={11} d="M1.500.5h8q1 0 1 1v8q0 1-1 1h-8q-1 0-1-1v-8q0-1 1-1z" color="#000" />
            <Line w={11} d="M.5.5l10 10M10.500.5l-10 10" color="#000" />
          </CalcControls>
        </CalcTitleBar>
        <CalcBody>
          <Keypad>
            <ModeRow>
              <Line w={15} h={12} d="M0 1h15M0 6h15M0 11h15" color="#333" />
              <Mode>Standard</Mode>
              <Line w={15} d="M1 5V1h13v13H9.500M9 1v5.500h5M1.500 14l5-5M2.500 8.500h4.300v4.300" sw={1.2} />
            </ModeRow>
            <Expression>248 + 4 =</Expression>
            <Display>252</Display>
            <MemoryRow>
              <MemoryKey $off>MC</MemoryKey><MemoryKey $off>MR</MemoryKey><MemoryKey>M+</MemoryKey><MemoryKey>M−</MemoryKey><MemoryKey>MS</MemoryKey>
            </MemoryRow>
            <Keys>{keys.map(([kind, label], i) => <Key key={i} $kind={kind}>{label}</Key>)}</Keys>
          </Keypad>
          <HistoryPane>
            <PaneTabs><PaneTab $on>History</PaneTab><PaneTab>Memory</PaneTab></PaneTabs>
            <HistoryList>
              {history.map(([a, b, r], i) => (
                <HistoryItem key={r} $hover={i === 0}>
                  <Operation><span>{a}</span><span>+</span>{b}<b>=</b></Operation>
                  <Result>{r}</Result>
                </HistoryItem>
              ))}
              <HistoryThumb />
            </HistoryList>
            <Trash><Line w={15} h={17} d="M.5 3h14M2 3l1.300 13h8.400L13 3M5.500 3q0-2.200 2-2.200t2 2.200M6 7v5.500M9 7v5.500" sw={1.1} /></Trash>
          </HistoryPane>
        </CalcBody>
      </CalcWindow>
    </Screen>
  );
}
